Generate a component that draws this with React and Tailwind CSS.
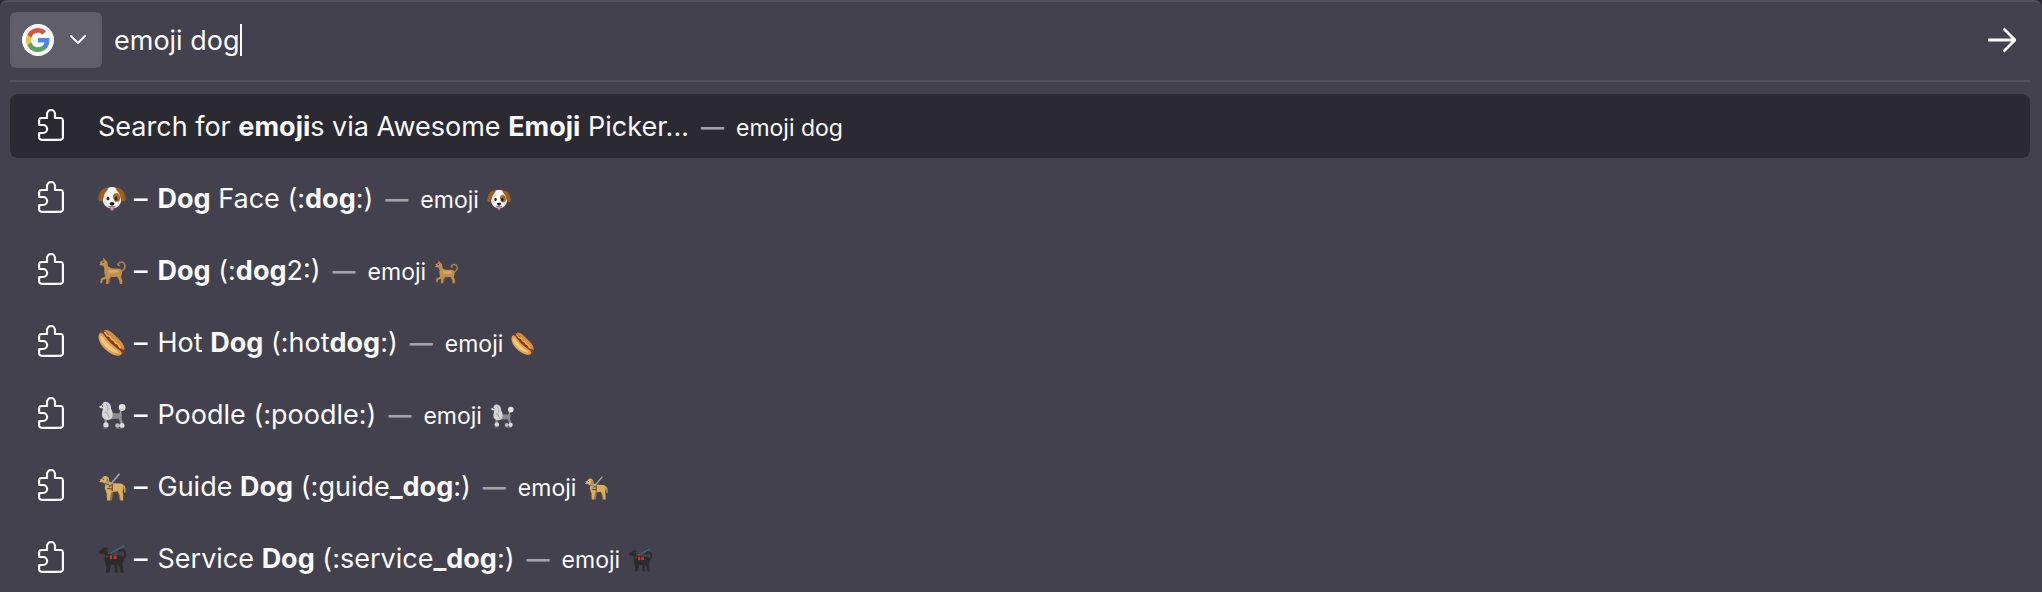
import { useState } from "react";

function GoogleLogo() {
  return (
    <svg viewBox="0 0 32 32" className="size-8 shrink-0" aria-hidden="true">
      <circle cx="16" cy="16" r="16" fill="#fff" />
      <g transform="translate(4 4)">
        <path fill="#4f86ec" d="M23.5 12.3c0-.8-.1-1.600-.2-2.400H12v4.600h6.500a5.500 5.500 0 0 1-2.400 3.600v3h3.900c2.200-2.100 3.500-5.200 3.500-8.800z" />
        <path fill="#58a55c" d="M12 24c3.200 0 6-1.100 8-2.900l-3.900-3c-1.100.7-2.500 1.200-4.100 1.200a7.200 7.200 0 0 1-6.700-5H1.300v3.100A12 12 0 0 0 12 24z" />
        <path fill="#f1bd42" d="M5.300 14.300a7.200 7.200 0 0 1 0-4.600V6.600h-4a12 12 0 0 0 0 10.800z" />
        <path fill="#d85140" d="M12 4.800c1.800 0 3.300.6 4.600 1.800L20 3.200A12 12 0 0 0 1.300 6.600l4 3.100A7.200 7.200 0 0 1 12 4.800z" />
      </g>
    </svg>
  );
}

function PuzzleIcon() {
  return (
    <svg viewBox="0 0 26 32" className="mb-0.5 h-8 w-6.5 shrink-0" fill="none" stroke="#fbfbfe" strokeWidth="2.2" strokeLinejoin="round" aria-hidden="true">
      <path d="M9 9V5a4 4 0 0 1 8 0v4h5.500a2.400 2.400 0 0 1 2.400 2.400v17a2.400 2.400 0 0 1-2.400 2.400h-19a2.400 2.400 0 0 1-2.400-2.400V24h4a4 4 0 0 0 0-8h-4v-4.600A2.400 2.400 0 0 1 3.500 9z" />
    </svg>
  );
}

function DogFace() {
  return (
    <g>
      <path d="M14 2c6 0 9.500 4.500 9.500 11 0 6-3.500 10.500-9.500 10.500S4.500 19 4.500 13C4.500 6.500 8 2 14 2z" fill="#e9e8e6" />
      <path d="M14 2.500c3 0 4 3 3.500 7-.3 3 2.500 5 2.500 8s-3 4.500-6 4.500-6-1.500-6-4.500 2.800-5 2.500-8c-.5-4 .5-7 3.500-7z" fill="#fff" />
      <path d="M8 3C4 3.500 2.200 6.500.8 10.500c-.9 2.700-.5 5.500 1 6 2 .6 3.400-2 4-5C6.400 8.500 8.500 6 10.500 3.500 10 3 9 2.800 8 3z" fill="#9a5f1c" />
      <path d="M20 3c4 .5 5.800 3.500 7.200 7.500.9 2.700.5 5.500-1 6-2 .6-3.400-2-4-5-.6-3-2.700-5.500-4.700-8C18 3 19 2.800 20 3z" fill="#9a5f1c" />
      <ellipse cx="18.600" cy="12.500" rx="3.400" ry="4.400" fill="#ad671d" transform="rotate(-12 18.600 12.500)" />
      <ellipse cx="10" cy="13.500" rx="1.400" ry="2" fill="#26211f" />
      <ellipse cx="18" cy="13.500" rx="1.400" ry="2" fill="#26211f" />
      <path d="M12.300 21.500h3.400v2.400a1.700 1.700 0 0 1-3.400 0z" fill="#ee7f94" />
      <path d="M11.500 18.200c0-1.200 5-1.200 5 0 0 1.100-1.300 2.300-2.500 2.300s-2.500-1.200-2.500-2.300z" fill="#171413" />
      <path d="M10.500 21.300c1.500 1 2.800.6 3.500-.8.700 1.400 2 1.800 3.500.8" fill="none" stroke="#3b302c" strokeWidth=".8" />
    </g>
  );
}

function Dog() {
  return (
    <g>
      <path d="M22.500 14.500c3.200-1.200 4.900-4 4.300-6.800-.7-2.800-4.600-3.500-6.500-1-.6 1 .1 1.900 1.200 1.800" fill="none" stroke="#a87d48" strokeWidth="1.700" strokeLinecap="round" />
      <path d="M19 17l4 1 1.500 4.500.8 4.500h-2l-1.500-4z" fill="#7d5327" />
      <path d="M10 19l3 1-1.500 6.500h-2z" fill="#8a5c2c" />
      <path d="M1 5.500L4.800 3.500 5.200.6 7.500 3 9.300 5l.9 4.500c1.500 1.200 3 1.800 5 1.900l7 .3c2.100 1.200 2.400 3.800 1.400 6l-.8 2.300 1.400 3-.3 4h-2.100l-.5-3.500-2.300-4c-2 .6-4.500.7-6.500.3L10.700 23l-.5 4H8l.3-5.200-3.400 1.300L4 26H2.300l.6-4.300 4.600-2.500C6.200 17 6 14.500 6.400 12L5.500 8.800 3 8.600 1.200 7.500z" fill="#c18f4e" />
      <path d="M10 12.500c3.500.8 7.500.5 11 .5.300 1.500-1 2.600-3 2.700l-7 .3z" fill="#d9ab68" />
      <path d="M5.300 1l1.700 3-2-.5z" fill="#b55b47" />
      <circle cx="5" cy="5.200" r=".7" fill="#30231a" />
      <circle cx="1.500" cy="6.200" r=".8" fill="#30231a" />
    </g>
  );
}

function HotDog() {
  return (
    <g>
      <path d="M6 1.500C9 .2 12 1.500 15.500 5s8.500 7.500 10.200 11.500c1 2.500 1 5-.2 6.500L4 5z" fill="#cf8f45" />
      <path d="M3.500 1.500c2-1 4 .2 5.500 2.500l13.500 15c2.500 1.300 4.700 2.700 4.500 4.500-.3 2-3 2-5 1.300L4 6C2.500 4.500 2.300 2.500 3.500 1.500z" fill="#8d3522" />
      <path d="M6 3.500c3-.5 1.500 3.500 4.500 3.500s1.500 3.500 4.200 3.800 1.300 3.300 4 3.700 1.300 3.500 4.300 4.500" fill="none" stroke="#efbd4b" strokeWidth="1.500" />
      <path d="M1.500 4.500C3 2.800 5 4.500 7 7.500c4 5.500 8.500 9.500 14 13.200 2.500 1.700 3.500 3.500 2 5-2 1.800-6.500 1.300-11-1.700C6.500 20.500 2 15.500.8 10.500.3 8 .4 5.800 1.500 4.500z" fill="#dda04e" />
      <path d="M2.500 7C3.500 6 5 8.500 6.500 10.500c4 5 8 8.500 13 11.700 1.500 1 .8 2-.8 1.900C12 23.500 3 14.500 2.200 9.500 2 8.500 2 7.500 2.500 7z" fill="#f2c67c" />
    </g>
  );
}

function Poodle() {
  return (
    <g>
      <path d="M11 12l13 .5-.5 5 2 6h-2.500l-2.500-6-6 .5H9v6.500H6.500V15z" fill="#8d8d90" />
      <path d="M22 13l1.500-5" stroke="#a6a6a8" strokeWidth="1.500" />
      <path d="M1 5.500l3-1.500C4.500 1 7 0 9 1c2.500.8 4.500 3.500 4 7 1.500 1.500 2 4 1.500 7-.5 3-3 4.500-6 3.800C5.500 18.500 3.500 16 4 12.500c.2-2 .7-3.500 1-5L2 7z" fill="#d6d6d7" />
      <path d="M8 3c2 1.500 2.500 5 1.500 7.500M7 11c2 1 4 3 4 6" fill="none" stroke="#aaa" strokeWidth="1.200" />
      <circle cx="24.200" cy="6.500" r="3.400" fill="#e4e4e5" />
      <circle cx="8" cy="24" r="2.700" fill="#d9d9da" />
      <circle cx="19.500" cy="24.500" r="2.300" fill="#b9b9bb" />
      <circle cx="24" cy="24.500" r="2.500" fill="#dededf" />
      <path d="M5 27h4M18 27.200h7" stroke="#777" strokeWidth="1" />
      <circle cx="4.500" cy="5" r=".7" fill="#333" />
    </g>
  );
}

function GuideDog() {
  return (
    <g>
      <path d="M24 12c2.500 1 3.300 3.500 2.700 7" fill="none" stroke="#c99a4c" strokeWidth="1.600" strokeLinecap="round" />
      <path d="M12 19h3l-1 8.500h-2.500zM20 18l3 1 .5 8.500h-2z" fill="#9c7136" />
      <path d="M.8 7l3.400-1.500C5 3 7 2.500 9 3.500c2 .8 2.500 3 2.200 5 1.500 1.200 3 1.700 5 1.700l6.800.3c2 .6 2.800 3 2.300 5.500-.8 2-.7 3.500-.2 5l.1 6.500h-2.500l-.7-5-2.500-4.200c-2 .5-4 .7-5.800.5l-1.200 3-.7 5.700H9l-.3-7-2-5.500.6-4L5 9.500 1.500 9z" fill="#d9ad62" />
      <path d="M8.500 5c2 0 2.500 2.500 1.800 5L8.500 9z" fill="#b18340" />
      <path d="M7 10.500l4 1.200" stroke="#3f7fa0" strokeWidth="1.500" />
      <path d="M11 14l3-3.500M14.200 10.500v7.500M9 15.500l5 .5" fill="none" stroke="#5c4425" strokeWidth="1.200" />
      <path d="M12 12L21.500.8" stroke="#a9aaad" strokeWidth="1.500" />
      <circle cx="5.300" cy="6.300" r=".6" fill="#2e2218" />
      <circle cx="1.500" cy="7.500" r=".8" fill="#2e2218" />
    </g>
  );
}

function ServiceDog() {
  return (
    <g>
      <path d="M23 14.500c3.500-1 5-4 4.200-7-.7-2.600-4.300-3.200-6-1" fill="none" stroke="#2d2d2e" strokeWidth="2.400" strokeLinecap="round" />
      <path d="M.8 6.500L4 4.500C5 2.500 7 2 9 3c2 .8 2.500 3 2.200 5.500 1.400 1.200 3 1.800 5 1.800l6.800.2c2.300 1 2.800 4 2 6.500-.6 1.500-.6 3-.2 4.500l.7 6h-2.800l-.9-5-2.500-3.500.2 8.500H17l-.8-7.800-3.200-.2L11.500 27.500H7.800l.7-6L6.500 15l.5-5.500L5 9 1.500 8.500z" fill="#2b2b2c" />
      <path d="M8.500 4.500c2 .5 2.500 3 1.500 5.500" fill="none" stroke="#49494a" strokeWidth="1.200" />
      <path d="M11.500 10.200l7 .3.300 3.500-7 .2z" fill="#d9282e" />
      <path d="M14.800 10v8" stroke="#2b2b2c" strokeWidth="1.300" />
      <path d="M8 11l2.500 1" stroke="#a8262b" strokeWidth="1.300" />
      <path d="M12 8.500L26.500.6" stroke="#39707f" strokeWidth="1.300" />
    </g>
  );
}

function Emoji({ art: Art, label, small }) {
  return (
    <svg
      viewBox="0 0 28 28"
      role="img"
      aria-label={label}
      className={small ? "size-6 shrink-0" : "size-7 shrink-0"}
    >
      <Art />
    </svg>
  );
}

const results = [
  { title: <>Search for <b>emoji</b>s via Awesome <b>Emoji</b> Picker...</>, note: "emoji dog" },
  { art: DogFace, label: "dog face", title: <><b>Dog</b> Face (:<b>dog</b>:)</>, note: "emoji" },
  { art: Dog, label: "dog", title: <><b>Dog</b> (:<b>dog</b>2:)</>, note: "emoji" },
  { art: HotDog, label: "hot dog", title: <>Hot <b>Dog</b> (:hot<b>dog</b>:)</>, note: "emoji" },
  { art: Poodle, label: "poodle", title: <>Poodle (:poodle:)</>, note: "emoji" },
  { art: GuideDog, label: "guide dog", title: <>Guide <b>Dog</b> (:guide<b>_dog</b>:)</>, note: "emoji" },
  { art: ServiceDog, label: "service dog", title: <>Service <b>Dog</b> (:service<b>_dog</b>:)</>, note: "emoji" },
];

function ResultRow({ art, label, title, note, selected }) {
  return (
    <li>
      <button
        type="button"
        className={`flex h-16 w-full items-center rounded-lg pl-7 text-left whitespace-nowrap ${selected ? "bg-[#2b2a33]" : ""}`}
      >
        <PuzzleIcon />
        <span className="ml-8.5 flex items-center gap-2 pt-0.5">
          {art && <Emoji art={art} label={label} />}
          {art && <span className="mr-0.5 font-medium">–</span>}
          <span>{title}</span>
        </span>
        <span className="mx-3 pt-0.5 text-[23px] font-semibold text-[#a5a4ac]">—</span>
        <span className="flex items-center gap-2 pt-1 text-[23px]">
          <span>{note}</span>
          {art && <Emoji art={art} label={label} small />}
        </span>
      </button>
    </li>
  );
}

export default function App() {
  const [query, setQuery] = useState("emoji dog");
  return (
    <div className="bg-[#2b2a33]">
      <main className="overflow-hidden rounded-t-lg border-t-2 border-[#52515e] bg-[#42414d] pr-3 pl-2.5 font-['Inter','Liberation_Sans',sans-serif] text-[27px] leading-9 text-[#fbfbfe]">
        <form className="flex h-20 items-center border-b-2 border-[#52515e] pb-0.5" onSubmit={(e) => e.preventDefault()}>
          <button type="button" aria-label="Search engine: Google" className="flex h-14 items-center gap-4 rounded-md bg-[#5f5e69] pr-4 pl-3">
            <GoogleLogo />
            <svg viewBox="0 0 16 10" className="h-2.5 w-4" fill="none" stroke="#fbfbfe" strokeWidth="2" strokeLinecap="round" strokeLinejoin="round" aria-hidden="true">
              <path d="M1 1l7 7 7-7" />
            </svg>
          </button>
          <input
            aria-label="Search"
            value={query}
            onChange={(e) => setQuery(e.target.value)}
            className="ml-3 field-sizing-content bg-transparent pt-0.5 caret-transparent outline-none"
          />
          <span className="h-8 w-0.5 bg-[#fbfbfe]" />
          <button type="submit" aria-label="Go" className="mr-3.5 ml-auto">
            <svg viewBox="0 0 28 26" className="h-6.5 w-7" fill="none" stroke="#fbfbfe" strokeWidth="2.800" aria-hidden="true">
              <path d="M0 13h26M15.500 1.500L27 13 15.500 24.500" />
            </svg>
          </button>
        </form>
        <ul className="flex flex-col gap-2 pt-3 pb-0.5">
          {results.map((r, i) => (
            <ResultRow key={i} {...r} selected={i === 0} />
          ))}
        </ul>
      </main>
    </div>
  );
}
